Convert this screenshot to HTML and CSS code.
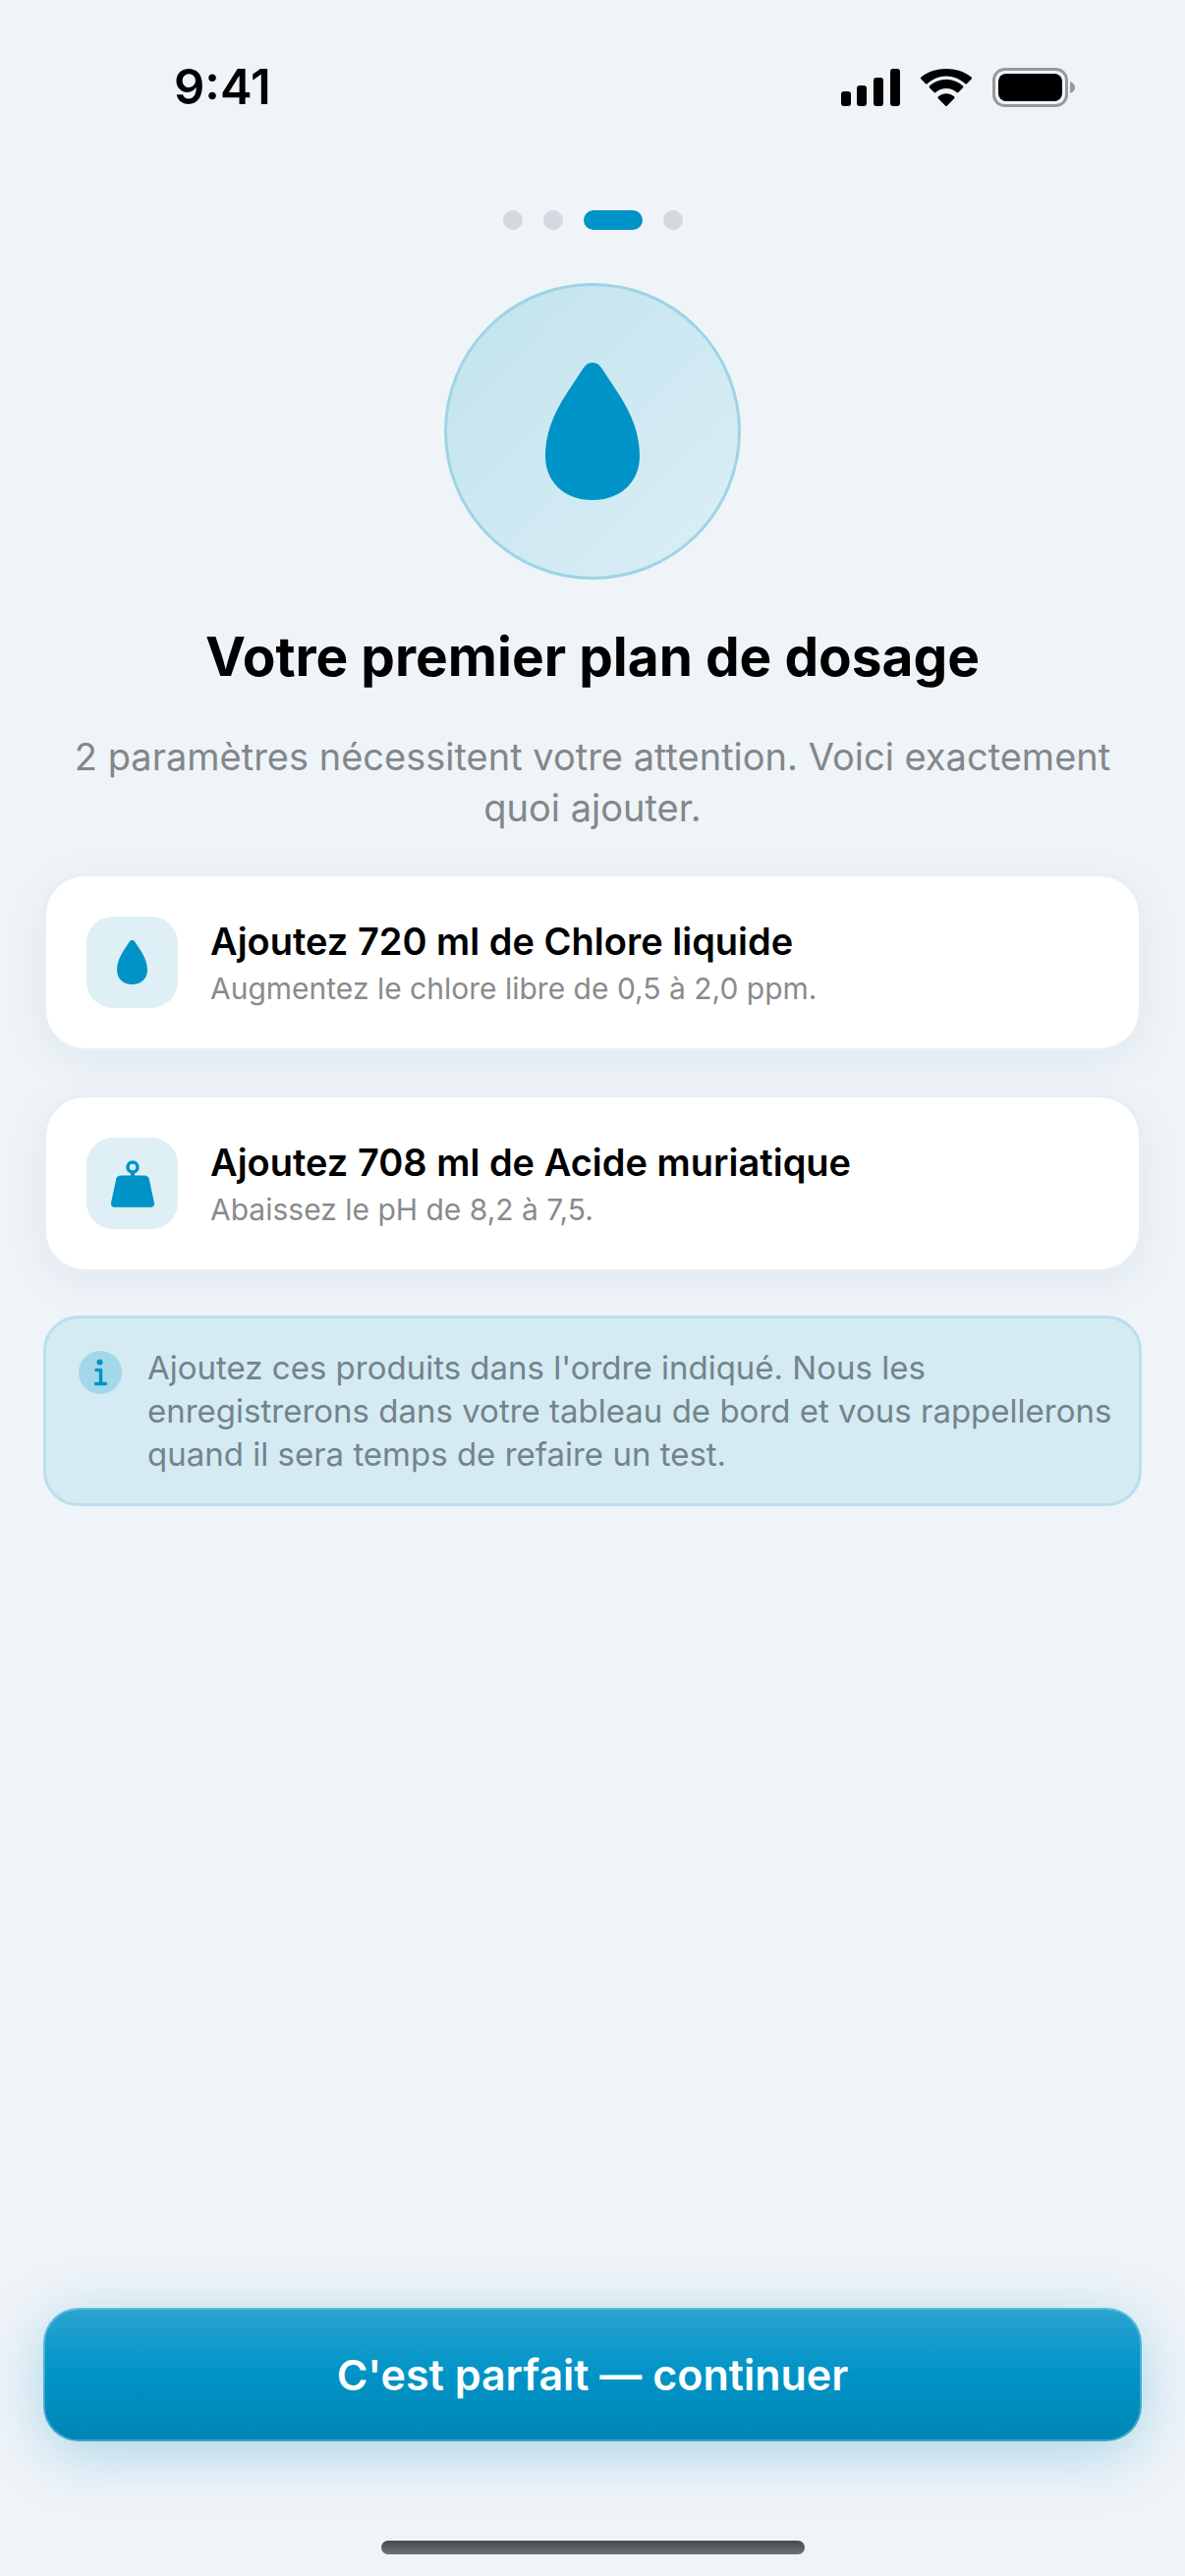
FILE: index.html
```html
<!DOCTYPE html>
<html lang="fr">
<head>
    <meta charset="UTF-8">
    <meta name="viewport" content="width=device-width, initial-scale=1.0">
    <title>Votre premier plan de dosage</title>
    <link rel="stylesheet" href="styles.css">
</head>
<body>
    <div class="screen">
        <header class="status-bar">
            <span class="status-time">9:41</span>
            <div class="status-icons">
                <svg class="icon-signal" viewBox="0 0 60 38" aria-hidden="true">
                    <rect x="0" y="23" width="10" height="15" rx="3"/>
                    <rect x="16" y="17" width="10" height="21" rx="3"/>
                    <rect x="33" y="9" width="10" height="29" rx="3"/>
                    <rect x="50" y="0" width="10" height="38" rx="3"/>
                </svg>
                <svg class="icon-wifi" viewBox="0 0 54 38" aria-hidden="true">
                    <path d="M27 7.500c7.200 0 14 2.800 19.300 7.800.5.500 1.200.5 1.600 0l4.700-4.800c.6-.6.600-1.500 0-2.100C38.400-2.800 15.600-2.800 1.400 8.400c-.6.600-.6 1.500 0 2.100l4.700 4.800c.4.500 1.100.5 1.600 0C13 10.300 19.800 7.500 27 7.500z"/>
                    <path d="M27 20c4 0 7.700 1.500 10.600 4.100.5.500 1.200.5 1.700 0l4.600-4.700c.6-.6.6-1.500 0-2.100-9.500-8.700-24.300-8.700-33.800 0-.6.600-.6 1.500 0 2.100l4.600 4.700c.5.500 1.200.5 1.700 0C19.300 21.500 23 20 27 20z"/>
                    <path d="M35.100 30.300c.6-.6.6-1.500 0-2.100-4.600-3.900-11.600-3.900-16.200 0-.6.600-.6 1.500 0 2.100l7.300 7.400c.5.500 1.100.5 1.600 0z"/>
                </svg>
                <svg class="icon-battery" viewBox="0 0 84 40" aria-hidden="true">
                    <rect x="1.500" y="1.500" width="74" height="37" rx="11" fill="none" stroke="#97999b" stroke-width="3"/>
                    <rect x="6" y="6" width="65" height="28" rx="8"/>
                    <path d="M79 14v12c3-1 5-3 5-6s-2-5-5-6z" fill="#97999b"/>
                </svg>
            </div>
        </header>

        <main class="content">
            <div class="steps">
                <span class="step"></span>
                <span class="step"></span>
                <span class="step active"></span>
                <span class="step"></span>
            </div>

            <div class="hero">
                <svg class="hero-drop" viewBox="0 0 96 140" aria-hidden="true">
                    <path d="M48 0c4 0 7 2 9.500 6L74 31C89 54 96 74 96 95c0 27-20 45-48 45S0 122 0 95c0-21 7-41 22-64L38.500 6C41 2 44 0 48 0z"/>
                </svg>
            </div>

            <h1>Votre premier plan de dosage</h1>
            <p class="subtitle">2 paramètres nécessitent votre attention. Voici exactement quoi ajouter.</p>

            <div class="cards">
                <div class="card">
                    <div class="card-icon">
                        <svg class="drop" viewBox="0 0 96 140" aria-hidden="true">
                            <path d="M48 0c4 0 7 2 9.500 6L74 31C89 54 96 74 96 95c0 27-20 45-48 45S0 122 0 95c0-21 7-41 22-64L38.500 6C41 2 44 0 48 0z"/>
                        </svg>
                    </div>
                    <div class="card-text">
                        <h2>Ajoutez 720 ml de Chlore liquide</h2>
                        <p>Augmentez le chlore libre de 0,5 à 2,0 ppm.</p>
                    </div>
                </div>

                <div class="card">
                    <div class="card-icon">
                        <svg class="weight" viewBox="0 0 44 48" aria-hidden="true">
                            <circle cx="22" cy="7" r="5" fill="none" stroke="#0093c7" stroke-width="3.500"/>
                            <path d="M20 12h4v4h-4z"/>
                            <path d="M10 15.500h24c2.500 0 4.200 1.300 4.800 3.700L43.900 43c.6 2.700-.9 4.800-3.700 4.800H3.800C1 47.800-.5 45.700.1 43l5.100-23.800c.6-2.400 2.300-3.700 4.800-3.700z"/>
                        </svg>
                    </div>
                    <div class="card-text">
                        <h2>Ajoutez 708 ml de Acide muriatique</h2>
                        <p>Abaissez le pH de 8,2 à 7,5.</p>
                    </div>
                </div>

                <div class="info">
                    <svg class="info-icon" viewBox="0 0 44 44" aria-hidden="true">
                        <circle cx="22" cy="22" r="22" fill="#a2d8e9"/>
                        <circle cx="21.500" cy="11.500" r="3"/>
                        <path d="M18 19.500h4.500v14M17.500 33.500h10" fill="none" stroke="#0093c7" stroke-width="3.400" stroke-linecap="round" stroke-linejoin="round"/>
                    </svg>
                    <p>Ajoutez ces produits dans l'ordre indiqué. Nous les enregistrerons dans votre tableau de bord et vous rappellerons quand il sera temps de refaire un test.</p>
                </div>
            </div>
        </main>

        <footer class="bottom">
            <button type="button" class="continue-btn">C'est parfait — continuer</button>
            <div class="home-indicator"></div>
        </footer>
    </div>
</body>
</html>
```
FILE: styles.css
```css
* {
    box-sizing: border-box;
}

body {
    font-family: Inter, "Liberation Sans", sans-serif;
    margin: 0;
    background: #eff4f8;
    color: #000;
}

h1, h2, p {
    margin: 0;
}

svg {
    display: block;
    flex-shrink: 0;
}

.screen {
    display: flex;
    flex-direction: column;
    min-height: 100vh;
}

/* Status bar */
.status-bar {
    display: flex;
    justify-content: space-between;
    align-items: center;
    padding: 59px 112px 0 177px;
}

.status-time {
    font-size: 49px;
    line-height: 60px;
    font-weight: 600;
}

.status-icons {
    display: flex;
    align-items: center;
    gap: 20px;
}

.icon-signal {
    width: 60px;
    height: 38px;
}

.icon-wifi {
    width: 54px;
    height: 38px;
}

.icon-battery {
    width: 84px;
    height: 40px;
}

/* Content */
.content {
    flex: 1;
    display: flex;
    flex-direction: column;
    align-items: center;
    padding: 95px 44px 0;
}

.steps {
    display: flex;
    gap: 21px;
}

.step {
    width: 20px;
    height: 20px;
    border-radius: 10px;
    background: #d3d9df;
}

.step.active {
    width: 60px;
    background: #0093c7;
}

.hero {
    display: flex;
    justify-content: center;
    align-items: center;
    width: 302px;
    height: 302px;
    margin-top: 54px;
    border: 3px solid #9dd4e6;
    border-radius: 50%;
    background: linear-gradient(135deg, #c0e3ee, #dceef5);
}

.hero-drop {
    width: 96px;
    height: 140px;
    fill: #0093c7;
}

h1 {
    margin-top: 44px;
    font-size: 55px;
    line-height: 68px;
    font-weight: 700;
    text-align: center;
}

.subtitle {
    margin-top: 42px;
    font-size: 38px;
    line-height: 52px;
    color: #83878a;
    text-align: center;
}

.cards {
    align-self: stretch;
    display: flex;
    flex-direction: column;
    gap: 44px;
    margin-top: 41px;
}

.card {
    display: flex;
    align-items: center;
    gap: 33px;
    padding: 41px;
    border: 3px solid #e8eff3;
    border-radius: 42px;
    background: #fff;
    background-clip: padding-box;
    box-shadow: 0 10px 42px rgba(0, 90, 110, 0.07);
}

.card-icon {
    display: flex;
    justify-content: center;
    align-items: center;
    width: 93px;
    height: 93px;
    border-radius: 27px;
    background: #deeff5;
    flex-shrink: 0;
}

.card-icon svg {
    fill: #0093c7;
}

.drop {
    width: 31px;
    height: 45px;
}

.weight {
    width: 44px;
    height: 48px;
}

.card-text h2 {
    margin-bottom: 4px;
    font-size: 38px;
    line-height: 48px;
    font-weight: 600;
}

.card-text p {
    font-size: 30px;
    line-height: 40px;
    color: #8a8a8c;
}

.info {
    display: flex;
    gap: 26px;
    padding: 28px 24px 28px 33px;
    border: 3px solid #b9dfee;
    border-radius: 36px;
    background: #d4ebf3;
}

.info-icon {
    width: 44px;
    height: 44px;
    margin-top: 5px;
    fill: #0093c7;
}

.info p {
    font-size: 33px;
    line-height: 44px;
    color: #74838b;
}

/* Bottom */
.bottom {
    display: flex;
    flex-direction: column;
    align-items: center;
    padding: 0 44px 22px;
}

.continue-btn {
    width: 100%;
    height: 136px;
    border: 2px solid rgba(255, 255, 255, 0.25);
    border-radius: 36px;
    background: linear-gradient(#2ba5d1, #0093c7 50%, #0085b3) border-box;
    box-shadow: 0 12px 60px rgba(0, 147, 199, 0.3);
    font-family: inherit;
    font-size: 43px;
    font-weight: 600;
    color: #fff;
    cursor: pointer;
}

.home-indicator {
    width: 431px;
    height: 14px;
    margin-top: 101px;
    border-radius: 7px;
    background: linear-gradient(#46494b, #6f7274);
}
```
